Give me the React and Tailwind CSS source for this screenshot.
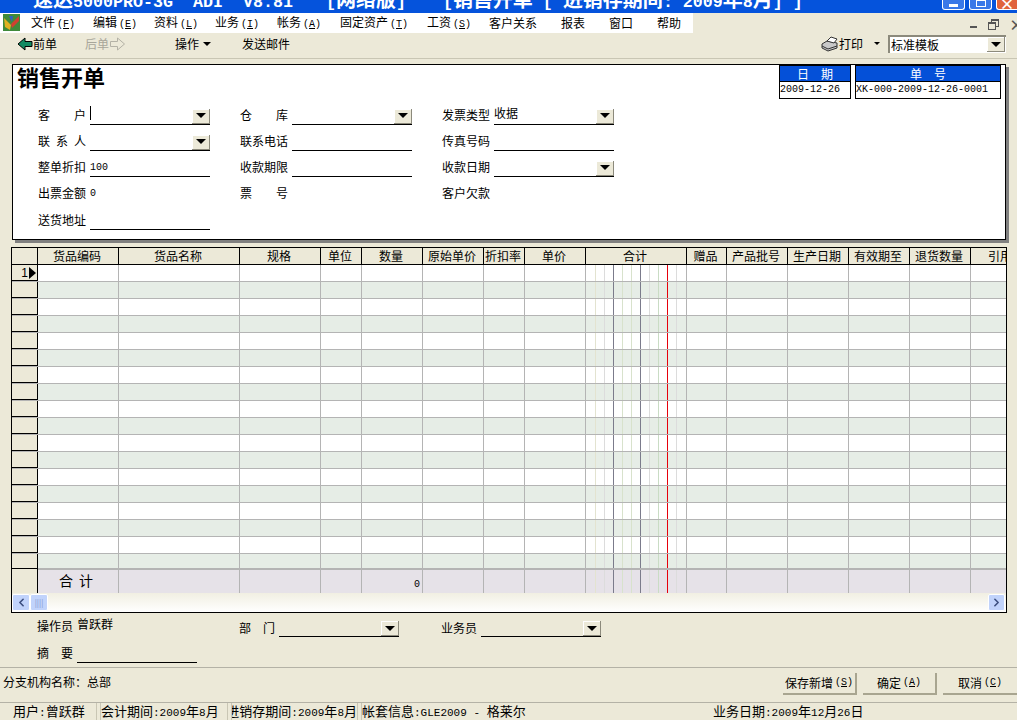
import { ChevronLeft, ChevronRight } from "lucide-react";

const FONT = "font-['Noto_Sans_CJK_SC','Liberation_Sans',sans-serif]";

// 列宽 (第一列是行号)
const columns = [
  { title: "货品编码", width: 81 },
  { title: "货品名称", width: 121 },
  { title: "规格", width: 81 },
  { title: "单位", width: 41 },
  { title: "数量", width: 61 },
  { title: "原始单价", width: 61 },
  { title: "折扣率", width: 41 },
  { title: "单价", width: 61 },
  { title: "合计", width: 101, money: true },
  { title: "赠品", width: 40 },
  { title: "产品批号", width: 61 },
  { title: "生产日期", width: 61 },
  { title: "有效期至", width: 61 },
  { title: "退货数量", width: 61 },
  { title: "引用", width: 61 },
];
const rows = Array.from({ length: 18 }, (_, i) => i);

// 合计列内的金额分隔线颜色
const moneyLines = [
  "bg-[#e3e3d0]",
  "bg-[#dcdcdc]",
  "bg-[#7b7b8b]",
  "bg-[#d8e2cc]",
  "bg-[#d8e2cc]",
  "bg-[#7b7b8b]",
  "bg-[#dcdcdc]",
  "bg-[#c9dcc4]",
  "bg-red-600",
  "bg-[#dcdcdc]",
];

function Latin({ children }) {
  return <span className="font-['Liberation_Mono',monospace] text-[10px]">{children}</span>;
}

// 状态栏里的数字略大
function Num({ children }) {
  return <span className="font-['Liberation_Mono',monospace] text-[11px]">{children}</span>;
}

function Hot({ label }) {
  return (
    <span className="ml-[2px] font-['Liberation_Mono',monospace] text-[10px]">
      (<span className="underline">{label}</span>)
    </span>
  );
}

function DropButton() {
  return (
    <span className="flex h-[15px] w-[18px] shrink-0 items-center justify-center border-r border-b border-[#8c8a7c] bg-[#ece9d8] shadow-[inset_1px_1px_0_#fff]">
      <span className="h-0 w-0 border-x-[5px] border-t-[5px] border-x-transparent border-t-black" />
    </span>
  );
}

function Field({ label, value, drop, line = true, caret }) {
  return (
    <div className="flex h-[26px] w-[202px] items-center">
      <span className="mr-[4px] flex w-[48px] shrink-0 justify-between pb-px text-xs leading-none">
        {[...label].map((ch, i) => (
          <span key={i}>{ch}</span>
        ))}
      </span>
      <div className={`flex h-[19px] w-[120px] items-end justify-between ${line ? "border-b border-black" : ""}`}>
        <span className={`self-start text-xs leading-[14px] ${caret ? "h-[14px] border-l border-black" : ""}`}>{value}</span>
        {drop && <DropButton />}
      </div>
    </div>
  );
}

function MoneyLines() {
  return (
    <div className="absolute inset-0 flex gap-[8px] pl-[9px]">
      {moneyLines.map((color, i) => (
        <span key={i} className={`h-full w-px shrink-0 ${color}`} />
      ))}
    </div>
  );
}

function TitleCjk({ children }) {
  return <span className={`${FONT} text-[20px]`}>{children}</span>;
}

export default function App() {
  return (
    <div className={`flex h-[720px] w-[1017px] flex-col overflow-hidden bg-[#ece9d8] text-black ${FONT}`}>
      {/* 标题栏 */}
      <div className="flex h-[13px] shrink-0 items-end justify-between overflow-hidden bg-[#0553dc]">
        <div className="whitespace-pre pl-[33px] font-['Liberation_Mono',monospace] text-[16.67px] font-bold leading-[20px] text-white">
          <TitleCjk>速达</TitleCjk>5000PRO-3G  ADI  V8.81   <span className="ml-[3px]">[</span><TitleCjk>网络版</TitleCjk>]   <span className="ml-[7px]">[</span><TitleCjk>销售开单</TitleCjk> [ <TitleCjk>进销存期间</TitleCjk>: 2009<TitleCjk>年</TitleCjk>8<TitleCjk>月</TitleCjk>] ]
        </div>
        <div className="mb-[3px] flex gap-[4px]">
          <span className="flex h-[12px] w-[23px] items-end justify-center rounded-b-[3px] border border-t-0 border-white bg-[#3a78e8]"><span className="mb-[2px] h-[3px] w-[9px] bg-white" /></span>
          <span className="flex h-[12px] w-[23px] items-end justify-center rounded-b-[3px] border border-t-0 border-white bg-[#3a78e8]"><span className="mb-[2px] h-[7px] w-[10px] border border-white" /></span>
          <span className="flex h-[12px] w-[21px] items-center justify-center overflow-hidden rounded-bl-[3px] border-b border-l border-white bg-[#e0633c] text-[15px] font-bold leading-none text-white">×</span>
        </div>
      </div>

      {/* 菜单栏 */}
      <div className="flex h-[20px] shrink-0 items-center justify-between">
        <div className="flex h-full w-[693px] items-center bg-white pb-px text-xs">
          <svg width="17" height="17" viewBox="0 0 17 17" className="ml-[3px] mr-[11px] shrink-0">
            <rect width="17" height="17" fill="#3f8a3a" />
            <path d="M1 4 L8 11 L7 16 L2 13Z" fill="#e0b020" />
            <path d="M8 10 L16 2 L16 7 L9 14Z" fill="#d04030" />
            <path d="M6 2 L10 2 L9 8Z" fill="#3060c0" />
          </svg>
          <span className="w-[62px]">文件<Hot label="F" /></span>
          <span className="w-[61px]">编辑<Hot label="E" /></span>
          <span className="w-[61px]">资料<Hot label="L" /></span>
          <span className="w-[62px]">业务<Hot label="I" /></span>
          <span className="w-[63px]">帐务<Hot label="A" /></span>
          <span className="w-[87px]">固定资产<Hot label="T" /></span>
          <span className="w-[62px]">工资<Hot label="S" /></span>
          <span className="w-[72px]">客户关系</span>
          <span className="w-[48px]">报表</span>
          <span className="w-[48px]">窗口</span>
          <span>帮助</span>
        </div>
        <div className="flex items-center pt-[2px] text-[#555]">
          <span className="mt-[6px] h-[2px] w-[7px] bg-[#555]" />
          <span className="relative ml-[11px] h-[11px] w-[11px]">
            <span className="absolute right-0 top-0 h-[8px] w-[8px] border border-t-2 border-[#555]" />
            <span className="absolute bottom-0 left-0 h-[8px] w-[8px] border border-t-2 border-[#555] bg-[#ece9d8]" />
          </span>
          <span className="ml-[10px] w-[8px] text-[15px] font-bold leading-none">×</span>
        </div>
      </div>

      {/* 工具栏 */}
      <div className="flex h-[26px] shrink-0 items-center justify-between border-b border-[#c9c6b4] pb-[4px] text-xs">
        <div className="flex items-center">
          <svg width="16" height="14" viewBox="0 0 16 14" className="ml-[17px]">
            <path d="M8 1 L1 7 L8 13 L8 9.5 L15 9.5 L15 4.5 L8 4.5Z" fill="#118a62" stroke="#000" />
          </svg>
          <span className="w-[52px]">前单</span>
          <span className="text-[#a8a69a]">后单</span>
          <svg width="17" height="14" viewBox="0 0 16 14">
            <path d="M8 1 L15 7 L8 13 L8 9.5 L1 9.5 L1 4.5 L8 4.5Z" fill="#ece9d8" stroke="#b4b2a6" />
          </svg>
          <span className="ml-[49px] flex items-center gap-[4px]">操作<span className="h-0 w-0 border-x-[4px] border-t-[4px] border-x-transparent border-t-black" /></span>
          <span className="ml-[31px]">发送邮件</span>
        </div>
        <div className="flex items-center pr-[11px]">
          <svg width="18" height="16" viewBox="0 0 18 16">
            <path d="M1 8 L6 5 L16 7 L16 12 L7 15 L1 12Z" fill="#c8c8c8" stroke="#333" />
            <path d="M6 5 L10 1 L16 3 L13 7Z" fill="#fff" stroke="#333" />
            <path d="M1 10 L7 13 L16 10" fill="none" stroke="#333" />
          </svg>
          <span className="w-[35px]">打印</span>
          <span className="h-0 w-0 border-x-[3px] border-t-[3px] border-x-transparent border-t-black" />
          <div className="ml-[8px] flex h-[18px] w-[118px] items-center justify-between border-t-2 border-l-2 border-[#8c8a7c] bg-white pr-px">
            <span className="pl-px text-xs leading-none">标准模板</span>
            <DropButton />
          </div>
        </div>
      </div>

      {/* 单据头 */}
      <div className="ml-[12px] mt-[5px] h-[176px] w-[994px] shrink-0 border border-black bg-white shadow-[3px_3px_0_#808080]">
        <div className="flex h-[37px] items-start justify-between pr-[4px]">
          <h1 className="-mt-[2px] pl-[4px] text-[22px] font-bold leading-[26px]">销售开单</h1>
          <div className="flex gap-[4px] text-xs">
            <div className="w-[72px] border border-black">
              <div className="h-[15px] bg-[#0450d8] text-center leading-[15px] text-white">日　期</div>
              <div className="h-[17px] border-t border-black font-['Liberation_Mono',monospace] text-[10px] leading-[16px]">2009-12-26</div>
            </div>
            <div className="w-[146px] border border-black">
              <div className="h-[15px] bg-[#0450d8] text-center leading-[15px] text-white">单　号</div>
              <div className="h-[17px] border-t border-black font-['Liberation_Mono',monospace] text-[10px] leading-[16px]">XK-000-2009-12-26-0001</div>
            </div>
          </div>
        </div>
        <div className="ml-[25px] grid w-[606px] grid-cols-3">
          <Field label="客  户" drop caret />
          <Field label="仓  库" drop />
          <Field label="发票类型" value="收据" drop />
          <Field label="联 系 人" drop />
          <Field label="联系电话" />
          <Field label="传真号码" />
          <Field label="整单折扣" value={<Latin>100</Latin>} />
          <Field label="收款期限" />
          <Field label="收款日期" drop />
          <Field label="出票金额" value={<Latin>0</Latin>} line={false} />
          <Field label="票  号" line={false} />
          <Field label="客户欠款" line={false} />
          <div className="pt-px">
            <Field label="送货地址" />
          </div>
        </div>
      </div>

      {/* 明细表格 */}
      <div className="ml-[11px] mt-[7px] flex h-[366px] w-[996px] shrink-0 flex-col overflow-hidden border border-black bg-white">
        <div className="flex h-[17px] shrink-0 border-b border-black bg-[#ece9d8] text-xs">
          <div className="w-[26px] shrink-0 border-r border-black" />
          {columns.map((col) => (
            <div key={col.title} style={{ width: col.width }} className="shrink-0 overflow-hidden whitespace-nowrap border-r border-black pr-[2px] text-center leading-[16px]">
              {col.title}
            </div>
          ))}
        </div>
        <div className="h-[303px] shrink-0 overflow-hidden">
          {rows.map((row) => (
            <div key={row} className={`flex h-[17px] border-b border-[#b4b4b4] ${row % 2 ? "bg-[#e6ede6]" : "bg-white"}`}>
              <div className="flex w-[26px] shrink-0 items-center justify-end border-r border-b border-r-black border-b-black bg-[#ece9d8] pr-px text-xs">
                {row === 0 && (
                  <>
                    <span className="font-['Liberation_Sans',sans-serif]">1</span>
                    <span className="ml-px h-0 w-0 border-y-[6px] border-l-[7px] border-y-transparent border-l-black" />
                  </>
                )}
              </div>
              {columns.map((col) => (
                <div key={col.title} style={{ width: col.width }} className="relative shrink-0 border-r border-[#b4b4b4]">
                  {col.money && <MoneyLines />}
                </div>
              ))}
            </div>
          ))}
        </div>
        <div className="flex h-[25px] shrink-0 border-t-2 border-[#b4b4b4] bg-[#e6e2e8]">
          <div className="-mt-[2px] w-[26px] shrink-0 border-t border-r border-black bg-[#ece9d8]" />
          {columns.map((col, i) => (
            <div key={col.title} style={{ width: col.width }} className="relative flex shrink-0 items-center border-r border-[#b4b4b4] pb-[3px]">
              {col.money && <MoneyLines />}
              {i === 0 && <span className="pl-[21px] text-sm tracking-[6px]">合计</span>}
              {i === 4 && <span className="w-full pr-[2px] text-right"><Latin>0</Latin></span>}
            </div>
          ))}
        </div>
        <div className="flex h-[19px] shrink-0 items-center justify-between bg-gradient-to-b from-[#f1efe2] to-white">
          <div className="flex">
            <span className="flex h-[17px] w-[18px] items-center justify-center rounded-[2px] border border-white bg-[#c1d3fb]">
              <ChevronLeft size={13} strokeWidth={3} className="text-[#3d4f80]" />
            </span>
            <span className="flex h-[17px] w-[18px] items-center justify-center rounded-[2px] border border-white bg-[#c1d3fb] text-[8px] leading-none text-[#7f97d0]">
              ||||
            </span>
          </div>
          <span className="mr-px flex h-[17px] w-[17px] items-center justify-center rounded-[2px] border border-white bg-[#c1d3fb]">
            <ChevronRight size={13} strokeWidth={3} className="text-[#3d4f80]" />
          </span>
        </div>
      </div>

      {/* 单据尾 */}
      <div className="ml-[37px] flex h-[26px] shrink-0 items-center pt-[3px] text-xs">
        <span className="w-[40px] pb-[3px]">操作员</span>
        <span className="w-[162px] pb-[8px]">曾跃群</span>
        <span className="w-[40px]">部　门</span>
        <span className="flex h-[19px] w-[120px] items-end justify-end border-b border-black"><DropButton /></span>
        <span className="ml-[42px] w-[40px]">业务员</span>
        <span className="flex h-[19px] w-[120px] items-end justify-end border-b border-black"><DropButton /></span>
      </div>
      <div className="ml-[37px] flex h-[28px] shrink-0 items-center text-xs">
        <span className="w-[40px] pb-px">摘　要</span>
        <span className="h-[19px] w-[120px] border-b border-black" />
      </div>

      {/* 按钮区 */}
      <div className="flex h-[36px] shrink-0 items-center justify-between border-y border-[#b4b2a6] pl-[3px] text-xs">
        <span className="pb-[6px]">分支机构名称：总部</span>
        <div className="flex gap-[6px] pb-[3px]">
          <span className="flex h-[22px] w-[74px] items-center justify-center border-r-2 border-b-2 border-[#a8a590]">保存新增<Hot label="S" /></span>
          <span className="flex h-[22px] w-[74px] items-center justify-center border-r-2 border-b-2 border-[#a8a590]">确定<Hot label="A" /></span>
          <span className="flex h-[22px] w-[74px] items-center justify-center border-b-2 border-[#a8a590]">取消<Hot label="C" /></span>
        </div>
      </div>

      {/* 状态栏 */}
      <div className="flex min-h-0 flex-1 gap-[3px] overflow-hidden text-[13px] leading-[15px]">
        <span className="w-[97px] whitespace-nowrap border-r border-[#c9c6b4] pl-[13px]">用户<Num>:</Num>曾跃群</span>
        <span className="w-[128px] whitespace-nowrap border-x border-[#c9c6b4]">会计期间<Num>:2009</Num>年<Num>8</Num>月</span>
        <span className="flex w-[127px] items-baseline justify-end overflow-hidden whitespace-nowrap border-x border-[#c9c6b4]">
          <span className="shrink-0">进销存期间<Num>:2009</Num>年<Num>8</Num>月</span>
        </span>
        <span className="w-[349px] whitespace-nowrap border-l border-[#c9c6b4]">帐套信息<Num>:GLE2009 - </Num>格莱尔</span>
        <span className="whitespace-nowrap">业务日期<Num>:2009</Num>年<Num>12</Num>月<Num>26</Num>日</span>
      </div>
    </div>
  );
}
